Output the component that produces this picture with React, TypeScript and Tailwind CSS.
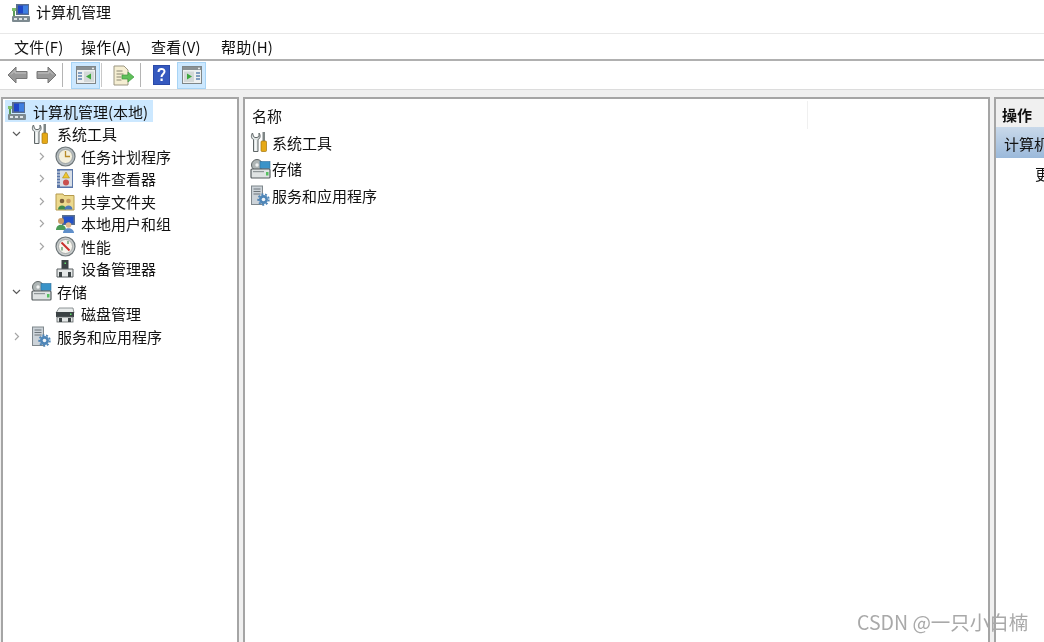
import React from 'react';

const FONT = '"Noto Sans CJK SC", "Liberation Sans", sans-serif';

const ComputerIcon = () => (
  <svg width="20" height="20" viewBox="0 0 20 20">
    <rect x="5" y="1" width="13" height="11" fill="#5a6f8f" />
    <rect x="7" y="2.500" width="10" height="8" fill="#1e46c8" />
    <rect x="12" y="2.500" width="5" height="8" fill="#3f7fe0" />
    <rect x="1" y="5" width="4" height="3" fill="#7fbf6a" />
    <rect x="2" y="8" width="2" height="5" fill="#5d9c58" />
    <rect x="1" y="13" width="18" height="6" rx="1" fill="#7d8a90" />
    <rect x="3" y="15" width="3" height="2" fill="#dfe5e8" />
    <rect x="8" y="15" width="3" height="2" fill="#dfe5e8" />
    <rect x="13" y="15" width="3" height="2" fill="#dfe5e8" />
  </svg>
);

const ToolsIcon = () => (
  <svg width="20" height="22" viewBox="0 0 20 22">
    <path d="M2.500 2C0.800 4 1 7.500 3.500 8.500V20.500H8V8.500C10.500 7.500 10.700 4 9 2V5.500L7 6.500H5L3.500 5.500z" fill="#dfe4e4" stroke="#5f6667" strokeWidth="1" />
    <rect x="5" y="9" width="1.500" height="11" fill="#f7f9f9" />
    <rect x="12.500" y="1" width="2.500" height="9" fill="#7f8686" />
    <rect x="11" y="10" width="5.500" height="10.500" rx="1" fill="#e6a916" stroke="#a2750e" strokeWidth="0.700" />
  </svg>
);

const ClockIcon = () => (
  <svg width="21" height="21" viewBox="0 0 21 21">
    <circle cx="10.500" cy="10.500" r="9.500" fill="#b8bfc2" stroke="#6e7679" strokeWidth="1.200" />
    <circle cx="10.500" cy="10.500" r="7" fill="#f3efdc" stroke="#8f979a" strokeWidth="0.800" />
    <path d="M10.500 5v5.500H15" fill="none" stroke="#b88a28" strokeWidth="1.300" />
  </svg>
);

const EventIcon = () => (
  <svg width="20" height="21" viewBox="0 0 20 21">
    <rect x="2" y="1" width="16" height="19" fill="#5a76a8" />
    <rect x="5" y="2.500" width="12" height="16" fill="#d9dfe6" />
    <path d="M11 4l3.500 6h-7z" fill="#efc62e" stroke="#9a7d12" strokeWidth="0.500" />
    <circle cx="11" cy="14.500" r="3" fill="#c9504e" />
    <path d="M2 4h3M2 7h3M2 10h3M2 13h3M2 16h3" stroke="#dfe4ea" strokeWidth="1" />
  </svg>
);

const SharedIcon = () => (
  <svg width="20" height="20" viewBox="0 0 20 20">
    <path d="M1 3h7l1 1.500h10V19H1z" fill="#ecd98e" stroke="#b59a4c" strokeWidth="1" />
    <circle cx="7" cy="10" r="2.300" fill="#7a5f3a" />
    <path d="M3 18.500c0-5.500 8-5.500 8 0z" fill="#3f8a4a" />
    <circle cx="13.500" cy="10" r="2.300" fill="#c89a60" />
    <path d="M9.500 18.500c0-5.500 8-5.500 8 0z" fill="#4d78b8" />
  </svg>
);

const UsersIcon = () => (
  <svg width="21" height="21" viewBox="0 0 21 21">
    <rect x="7" y="2" width="13" height="10" fill="#5a6f8f" />
    <rect x="8.500" y="3.500" width="10" height="7" fill="#2452c8" />
    <circle cx="6" cy="8" r="3" fill="#c99a68" />
    <path d="M1 17c0-7 10-7 10 0z" fill="#4b9c58" />
    <circle cx="13.500" cy="12" r="2.800" fill="#e2b88c" />
    <path d="M8 20c0-6.500 11-6.500 11 0z" fill="#5f8fca" />
  </svg>
);

const GaugeIcon = () => (
  <svg width="21" height="21" viewBox="0 0 21 21">
    <circle cx="10.500" cy="10.500" r="9.500" fill="#c8cccc" stroke="#6e7679" strokeWidth="1.200" />
    <circle cx="10.500" cy="10.500" r="7" fill="#f7f5ee" stroke="#9aa0a0" strokeWidth="0.800" />
    <path d="M6.500 6.500l8 8" stroke="#c8302a" strokeWidth="2" />
    <path d="M7 11v3.500M13 5v3" stroke="#4f8f58" strokeWidth="1.200" />
  </svg>
);

const DeviceIcon = () => (
  <svg width="20" height="20" viewBox="0 0 20 20">
    <rect x="6.500" y="1" width="7" height="9" fill="#3b4244" />
    <rect x="9.500" y="3.500" width="1.500" height="1.500" fill="#5fe06a" />
    <path d="M2 10h16v8H2z" fill="#e4e7e7" stroke="#5a6163" strokeWidth="1" />
    <rect x="4" y="13" width="3" height="5" fill="#3b4244" />
    <rect x="13" y="13" width="3" height="5" fill="#3b4244" />
  </svg>
);

const StorageIcon = () => (
  <svg width="21" height="20" viewBox="0 0 21 20">
    <circle cx="7" cy="6" r="5.500" fill="#aeb5b5" stroke="#5f6667" strokeWidth="1" />
    <circle cx="7" cy="6" r="1.700" fill="#f0f2f2" />
    <rect x="10" y="2.500" width="10" height="7" fill="#3a93c8" stroke="#2d6f9c" strokeWidth="0.600" />
    <rect x="1" y="10" width="19" height="9" rx="1" fill="#dfe3e3" stroke="#565d5f" strokeWidth="1.200" />
    <rect x="3" y="12" width="11" height="1.200" fill="#8f9698" />
    <rect x="16" y="13" width="2.500" height="3.500" fill="#55c060" />
  </svg>
);

const DiskIcon = () => (
  <svg width="20" height="20" viewBox="0 0 20 20">
    <path d="M4 4h14l1 5H1z" fill="#e8ebeb" stroke="#757c7e" strokeWidth="0.800" />
    <rect x="1" y="8" width="18" height="5" fill="#3b4244" />
    <rect x="15" y="9.500" width="1.500" height="1.500" fill="#5fe06a" />
    <rect x="2" y="13" width="16" height="5" fill="#e4e7e7" stroke="#5a6163" strokeWidth="0.800" />
    <rect x="4" y="14" width="3" height="4" fill="#3b4244" />
    <rect x="13" y="14" width="3" height="4" fill="#3b4244" />
  </svg>
);

const ServicesIcon = () => (
  <svg width="20" height="21" viewBox="0 0 20 21">
    <rect x="1.500" y="1" width="11" height="18.500" fill="#ccd3d9" stroke="#7f878c" strokeWidth="1" />
    <path d="M3.500 4h7M3.500 6.500h7M3.500 9h7" stroke="#6d757a" strokeWidth="1" />
    <circle cx="13.500" cy="14.500" r="4.500" fill="#4f86b8" />
    <circle cx="13.500" cy="14.500" r="5.300" fill="none" stroke="#4f86b8" strokeWidth="1.800" strokeDasharray="2 1.700" />
    <circle cx="13.500" cy="14.500" r="1.800" fill="#eef3f8" />
  </svg>
);

const NavArrow = ({ flip }: { flip?: boolean }) => (
  <svg width="21" height="18" viewBox="0 0 21 18" className={flip ? '-scale-x-100' : ''}>
    <path d="M1 9l8-8v4.500h11v7H9V17z" fill="#999999" stroke="#777777" strokeWidth="1" />
    <path d="M4 8.500l4-4v2.500h11" fill="none" stroke="#c6c6c6" strokeWidth="1" />
  </svg>
);

const PaneIcon = ({ right }: { right?: boolean }) => (
  <svg width="20" height="18" viewBox="0 0 20 18">
    <rect x="0.500" y="0.500" width="19" height="17" fill="#eef0f0" stroke="#7f8688" />
    <rect x="1" y="1" width="18" height="3" fill="#8a9194" />
    <rect x="16" y="1.700" width="2" height="1.500" fill="#e8eaea" />
    {right ? (
      <>
        <rect x="2" y="5.500" width="10" height="10.500" fill="#d3d8d8" />
        <path d="M5 7.500l5 3-5 3z" fill="#3da83d" />
        <path d="M14 7h4M14 10h4M14 13h4" stroke="#5f83b0" strokeWidth="1.500" />
      </>
    ) : (
      <>
        <rect x="8" y="5.500" width="10" height="10.500" fill="#d3d8d8" />
        <path d="M15 7.500l-5 3 5 3z" fill="#3da83d" />
        <path d="M2 7h4M2 10h4M2 13h4" stroke="#5f83b0" strokeWidth="1.500" />
      </>
    )}
  </svg>
);

const ExportIcon = () => (
  <svg width="21" height="21" viewBox="0 0 21 21">
    <path d="M1 1h10l4 4v15H1z" fill="#f5eed2" stroke="#9b9682" strokeWidth="1" />
    <path d="M3.500 6h6M3.500 9h7M3.500 12h5M3.500 15h5" stroke="#8a8672" strokeWidth="1" />
    <path d="M9 10h6V7l6 5-6 5v-3H9z" fill="#5fc05a" stroke="#3f9a40" strokeWidth="0.700" />
  </svg>
);

const HelpIcon = () => (
  <svg width="17" height="20" viewBox="0 0 17 20">
    <rect width="17" height="20" fill="#2a4aa8" />
    <rect x="1" y="1" width="15" height="18" fill="#3559bf" />
    <path d="M5.500 7c0-4 6-4 6-.500 0 2.500-3 2.500-3 5.500" fill="none" stroke="#fff" strokeWidth="2" />
    <rect x="7.500" y="13.500" width="2.200" height="2.500" fill="#fff" />
  </svg>
);

const Chevron = ({ open }: { open: boolean }) => (
  <svg width="9" height="9" viewBox="0 0 9 9">
    {open ? (
      <path d="M1 3l3.500 3.500L8 3" fill="none" stroke="#5a5a5a" strokeWidth="1.200" />
    ) : (
      <path d="M3 1l3.500 3.500L3 8" fill="none" stroke="#a6a6a6" strokeWidth="1.200" />
    )}
  </svg>
);

interface TreeRow {
  label: string;
  depth: 1 | 2;
  icon: React.ReactNode;
  arrow?: 'open' | 'closed';
}

const treeRows: TreeRow[] = [
  { label: '系统工具', depth: 1, icon: <ToolsIcon />, arrow: 'open' },
  { label: '任务计划程序', depth: 2, icon: <ClockIcon />, arrow: 'closed' },
  { label: '事件查看器', depth: 2, icon: <EventIcon />, arrow: 'closed' },
  { label: '共享文件夹', depth: 2, icon: <SharedIcon />, arrow: 'closed' },
  { label: '本地用户和组', depth: 2, icon: <UsersIcon />, arrow: 'closed' },
  { label: '性能', depth: 2, icon: <GaugeIcon />, arrow: 'closed' },
  { label: '设备管理器', depth: 2, icon: <DeviceIcon /> },
  { label: '存储', depth: 1, icon: <StorageIcon />, arrow: 'open' },
  { label: '磁盘管理', depth: 2, icon: <DiskIcon /> },
  { label: '服务和应用程序', depth: 1, icon: <ServicesIcon />, arrow: 'closed' },
];

const menus = [
  { label: '文件(F)', width: 'w-[47px]' },
  { label: '操作(A)', width: 'w-[50px]' },
  { label: '查看(V)', width: 'w-[50px]' },
  { label: '帮助(H)', width: 'w-[51px]' },
];

export default function App() {
  return (
    <div
      className="relative flex h-[642px] w-[1044px] flex-col overflow-hidden bg-white text-[15px] text-[#111111] blur-[0.35px]"
      style={{ fontFamily: FONT }}
    >
      <div className="flex h-[34px] shrink-0 items-center gap-[5px] border-b border-[#e8e8e8] pb-[7px] pl-[11px]">
        <ComputerIcon />
        <span className="mb-[3px] leading-none">计算机管理</span>
      </div>

      <div className="flex h-[27px] shrink-0 items-center gap-[20px] border-b-2 border-[#b0b0b0] pl-[14px]">
        {menus.map((m) => (
          <span key={m.label} className={`${m.width} whitespace-nowrap text-[15px] leading-none tracking-[0.2px]`}>
            {m.label}
          </span>
        ))}
      </div>

      <div className="flex h-[29px] shrink-0 items-center border-b border-[#dcdcdc] pl-[7px]">
        <NavArrow />
        <span className="ml-[8px]">
          <NavArrow flip />
        </span>
        <div className="ml-[5px] h-[24px] w-px bg-[#b4b4b4]" />
        <div className="ml-[8px] flex h-[27px] w-[29px] items-center justify-center border border-[#a8d4f5] bg-[#cce8ff]">
          <PaneIcon />
        </div>
        <div className="ml-px h-[24px] w-px bg-[#c8c8c8]" />
        <div className="ml-[11px]">
          <ExportIcon />
        </div>
        <div className="ml-[6px] h-[24px] w-px bg-[#b4b4b4]" />
        <div className="ml-[12px]">
          <HelpIcon />
        </div>
        <div className="ml-[7px] flex h-[27px] w-[29px] items-center justify-center border border-[#a8d4f5] bg-[#cce8ff]">
          <PaneIcon right />
        </div>
      </div>

      <div className="flex min-h-0 flex-1 bg-[#f0f0f0] pt-[7px] pl-px">
        <div className="w-[238px] shrink-0 border-2 border-b-0 border-[#a5a5a5] bg-white pt-px pl-[2px]">
          <div className="mb-[0.500px] flex h-[22px] w-[148px] items-center gap-[6px] bg-[#cce8ff] pl-[2px]">
            <ComputerIcon />
            <span className="leading-none">计算机管理(本地)</span>
          </div>
          {treeRows.map((row) => (
            <div
              key={row.label}
              className={`flex h-[22.500px] items-center ${row.depth === 1 ? 'pl-[7px]' : 'pl-[32px]'}`}
            >
              <span className={`flex shrink-0 items-center ${row.depth === 1 ? 'w-[19px]' : 'w-[18px]'}`}>
                {row.arrow && <Chevron open={row.arrow === 'open'} />}
              </span>
              <span className="flex w-[26px] shrink-0 items-center">{row.icon}</span>
              <span className="leading-none">{row.label}</span>
            </div>
          ))}
        </div>

        <div className="ml-[4px] w-[747px] shrink-0 border-2 border-b-0 border-[#a5a5a5] bg-white">
          <div className="flex h-[30px] items-center pt-[2px] pl-[7px]">
            <span className="leading-none">名称</span>
            <div className="ml-[525px] h-[28px] w-px bg-[#f0f0f0]" />
          </div>
          <div className="flex h-[26.500px] items-center pl-[5px]">
            <span className="flex w-[22px] shrink-0 items-center">
              <ToolsIcon />
            </span>
            <span className="leading-none">系统工具</span>
          </div>
          <div className="flex h-[26.500px] items-center pl-[5px]">
            <span className="flex w-[22px] shrink-0 items-center">
              <StorageIcon />
            </span>
            <span className="leading-none">存储</span>
          </div>
          <div className="flex h-[26.500px] items-center pl-[5px]">
            <span className="flex w-[22px] shrink-0 items-center">
              <ServicesIcon />
            </span>
            <span className="leading-none">服务和应用程序</span>
          </div>
        </div>

        <div className="ml-[4px] min-w-0 flex-1 border-2 border-r-0 border-b-0 border-[#a5a5a5] bg-white">
          <div className="flex h-[28px] items-center whitespace-nowrap bg-[#f0f0f0] pt-[3px] pl-[6px] font-bold leading-none">
            操作
          </div>
          <div className="flex h-[31px] items-center whitespace-nowrap bg-gradient-to-b from-[#c9d9ea] to-[#9bb9da] pt-[2px] pl-[8px] leading-none">
            计算机管理
          </div>
          <div className="flex h-[30px] items-center whitespace-nowrap pl-[39px] leading-none">更多操作</div>
        </div>
      </div>

      <div className="absolute top-[610px] left-[857px] text-[19.500px] leading-[24px] whitespace-nowrap text-[#a9a9a9]">
        CSDN @一只小白楠
      </div>
    </div>
  );
}
